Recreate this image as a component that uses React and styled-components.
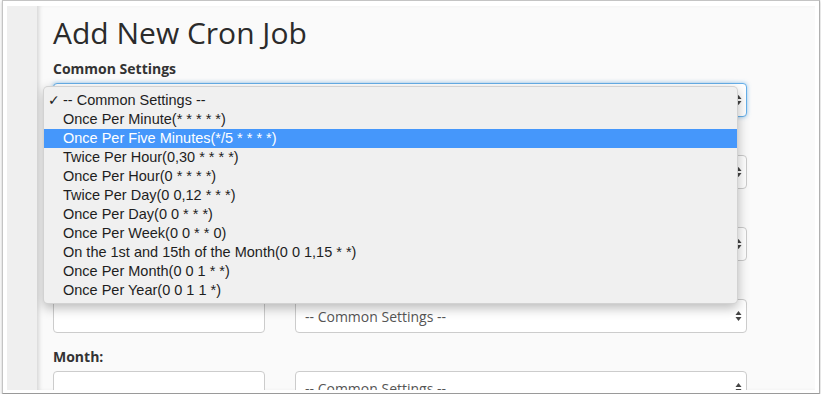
import React from 'react'
import styled, { createGlobalStyle } from 'styled-components'

const GlobalStyle = createGlobalStyle`
  html, body {
    margin: 0;
    padding: 0;
    background: #ffffff;
  }
  body {
    font-family: "Open Sans", "Liberation Sans", sans-serif;
  }
  * {
    box-sizing: border-box;
  }
`

const OPTIONS = [
  '-- Common Settings --',
  'Once Per Minute(* * * * *)',
  'Once Per Five Minutes(*/5 * * * *)',
  'Twice Per Hour(0,30 * * * *)',
  'Once Per Hour(0 * * * *)',
  'Twice Per Day(0 0,12 * * *)',
  'Once Per Day(0 0 * * *)',
  'Once Per Week(0 0 * * 0)',
  'On the 1st and 15th of the Month(0 0 1,15 * *)',
  'Once Per Month(0 0 1 * *)',
  'Once Per Year(0 0 1 1 *)'
]

const FIELDS = ['Minute:', 'Hour:', 'Day:', 'Month:', 'Weekday:']

const ScWindow = styled.div`
  margin-left: 2px;
  width: 818px;
  height: 394px;
  border: 1px solid #c4c4c4;
  border-bottom-color: #9a9a9a;
  border-right-color: #b0b0b0;
  box-shadow: 0 1px 3px rgba(0, 0, 0, 0.25);
  padding: 5px 4px 3px 4px;
  background: #ffffff;
`

const ScScreen = styled.div`
  display: flex;
  height: 100%;
  overflow: hidden;
`

const ScSidebar = styled.div`
  width: 30px;
  flex: none;
  background: #efefef;
`

const ScMain = styled.div`
  flex: 1;
  background: #fafafa;
  padding: 10px 0 0 16px;
  box-shadow: inset 4px 0 4px -2px rgba(0, 0, 0, 0.15);
  overflow: hidden;
`

const ScTitle = styled.h1`
  margin: 0 0 10px;
  font-family: "Open Sans", sans-serif;
  font-weight: 400;
  font-size: 30px;
  line-height: 33px;
  color: #2b2b2b;
`

const ScForm = styled.div`
  width: 694px;
`

const ScGroup = styled.div`
  margin-bottom: 14px;
`

const ScLabel = styled.div`
  font-family: "Open Sans", sans-serif;
  font-weight: 700;
  font-size: 14px;
  line-height: 20px;
  color: #333333;
  margin-bottom: 4px;
`

const ScRow = styled.div`
  display: grid;
  grid-template-columns: 212px 1fr;
  column-gap: 30px;
`

const ScAnchor = styled.div`
  position: relative;
`

const ScInput = styled.input`
  display: block;
  width: 100%;
  height: 34px;
  border: 1px solid #cccccc;
  border-radius: 4px;
  background: #ffffff;
  font-family: "Open Sans", sans-serif;
  font-size: 14px;
  padding: 0 10px;
  outline: none;
`

const ScSelect = styled.div`
  position: relative;
  display: flex;
  align-items: center;
  height: 34px;
  padding: 0 20px 0 9px;
  border: 1px solid ${props => (props.focused ? '#66afe9' : '#cccccc')};
  border-radius: 4px;
  background: #ffffff;
  box-shadow: ${props =>
    props.focused ? '0 0 4px rgba(102, 175, 233, 0.7)' : 'none'};
  font-family: "Open Sans", sans-serif;
  font-size: 14px;
  color: #555555;
  white-space: nowrap;
`

const ScArrows = styled.svg`
  position: absolute;
  right: 4px;
  top: 50%;
  margin-top: -6px;
`

const ScMenu = styled.div`
  position: absolute;
  left: -10px;
  top: 3px;
  width: 695px;
  padding: 4px 0 3px;
  background: #f0f0f0;
  border: 1px solid rgba(0, 0, 0, 0.12);
  border-radius: 5px;
  box-shadow: 0 4px 12px rgba(0, 0, 0, 0.28);
  z-index: 5;
`

const ScItem = styled.div`
  position: relative;
  height: 19px;
  line-height: 19px;
  padding-left: 19px;
  font-family: "Liberation Sans", Arial, sans-serif;
  font-size: 14.5px;
  color: ${props => (props.active ? '#ffffff' : '#1e1e1e')};
  background: ${props => (props.active ? '#4597fb' : 'transparent')};
  white-space: nowrap;
`

const ScCheck = styled.span`
  position: absolute;
  left: 4px;
  top: 0;
  font-family: "DejaVu Sans", sans-serif;
  font-size: 14px;
  font-weight: 700;
`

const Arrows = () => (
  <ScArrows width="7" height="12" viewBox="0 0 7 12">
    <path d="M3.5 1 L6.5 5 L0.5 5 Z" fill="#444" />
    <path d="M3.5 11 L6.5 7 L0.5 7 Z" fill="#444" />
  </ScArrows>
)

const Select = ({ focused }) => (
  <ScSelect focused={focused}>
    -- Common Settings --
    <Arrows />
  </ScSelect>
)

const App = () => (
  <>
    <GlobalStyle />
    <ScWindow>
      <ScScreen>
        <ScSidebar />
        <ScMain>
          <ScTitle>Add New Cron Job</ScTitle>
          <ScForm>
            <ScGroup>
              <ScLabel>Common Settings</ScLabel>
              <ScAnchor>
                <Select focused />
                <ScMenu>
                  {OPTIONS.map((opt, i) => (
                    <ScItem key={opt} active={i === 2}>
                      {i === 0 && <ScCheck>✓</ScCheck>}
                      {opt}
                    </ScItem>
                  ))}
                </ScMenu>
              </ScAnchor>
            </ScGroup>
            {FIELDS.map(field => (
              <ScGroup key={field}>
                <ScLabel>{field}</ScLabel>
                <ScRow>
                  <ScInput type="text" />
                  <Select />
                </ScRow>
              </ScGroup>
            ))}
          </ScForm>
        </ScMain>
      </ScScreen>
    </ScWindow>
  </>
)

export default App
